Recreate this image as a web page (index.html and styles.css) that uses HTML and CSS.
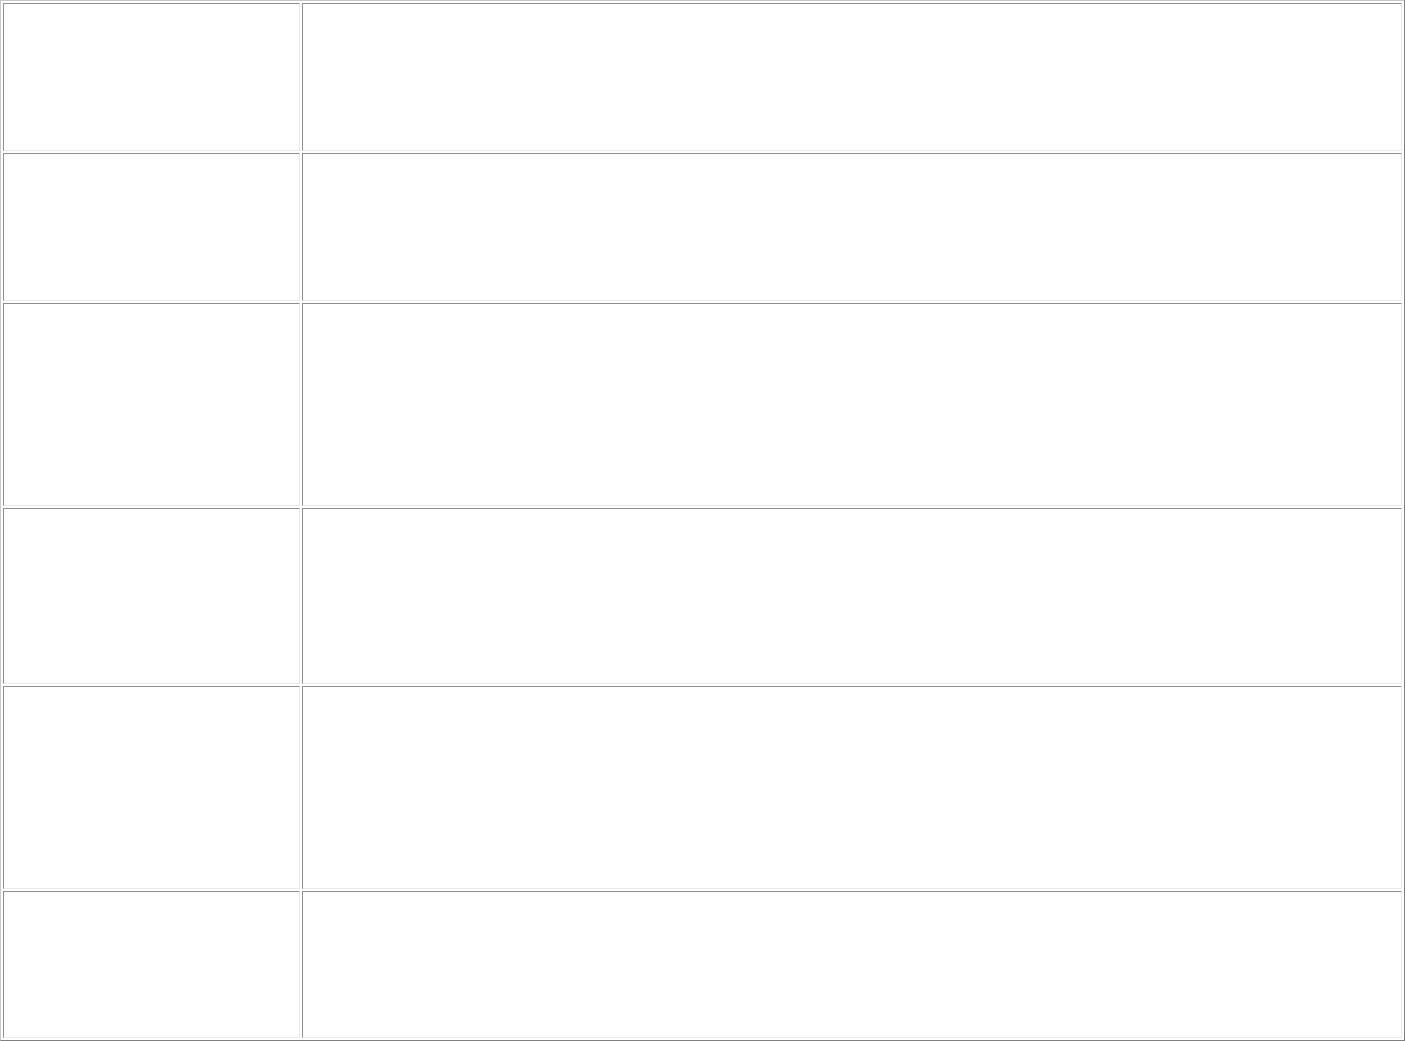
FILE: index.html
```html
<!DOCTYPE html>
<html>
<head>
<meta charset="utf-8">
<link rel="stylesheet" href="styles.css">
</head>
<body>
<table class="grid">
  <tr class="row-a"><td class="label"></td><td class="value"></td></tr>
  <tr class="row-a"><td class="label"></td><td class="value"></td></tr>
  <tr class="row-b"><td class="label"></td><td class="value"></td></tr>
  <tr class="row-c"><td class="label"></td><td class="value"></td></tr>
  <tr class="row-b"><td class="label"></td><td class="value"></td></tr>
  <tr class="row-d"><td class="label"></td><td class="value"></td></tr>
</table>
</body>
</html>
```
FILE: styles.css
```css
html, body {
  margin: 0;
  padding: 0;
  background: #ffffff;
  font-family: "Liberation Serif", serif;
}
.grid {
  width: 1405px;
  border-style: solid;
  border-width: 1px;
  border-color: #c8c8c8 #808080 #808080 #c8c8c8;
  border-spacing: 2px;
  border-collapse: separate;
  box-sizing: border-box;
}
.grid td {
  border-style: solid;
  border-width: 1px;
  border-color: #8e8e8e #eaeaea #eaeaea #8e8e8e;
  padding: 0;
  box-sizing: border-box;
}
.label {
  width: 297px;
}
.row-a td {
  height: 148px;
}
.row-b td {
  height: 203px;
}
.row-c td {
  height: 176px;
}
.row-d td {
  height: 147px;
}
```
